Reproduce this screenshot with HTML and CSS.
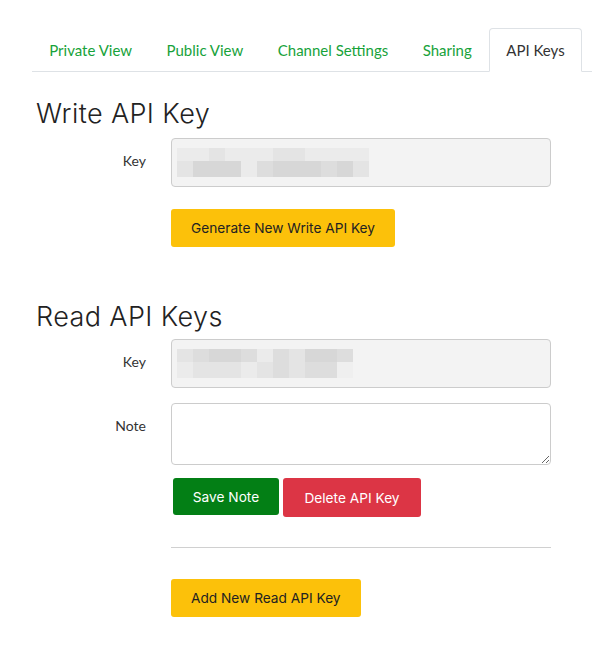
FILE: index.html
```html
<!DOCTYPE html>
<html lang="en">
<head>
    <meta charset="UTF-8">
    <meta name="viewport" content="width=device-width, initial-scale=1.0">
    <title>API Keys</title>
    <link rel="stylesheet" href="styles.css">
</head>
<body>
    <ul class="tabs">
        <li class="tab"><a href="#">Private View</a></li>
        <li class="tab"><a href="#">Public View</a></li>
        <li class="tab"><a href="#">Channel Settings</a></li>
        <li class="tab"><a href="#">Sharing</a></li>
        <li class="tab active"><a href="#">API Keys</a></li>
    </ul>

    <div class="panel">
        <h3>Write API Key</h3>
        <div class="row">
            <label>Key</label>
            <div class="field">
                <div class="key-box">
                    <div class="blur">
                        <div class="blur-row">
                            <i class="a"></i><i class="a"></i><i class="b"></i><i class="a"></i><i class="a"></i><i class="a"></i>
                            <i class="b"></i><i class="b"></i><i class="a"></i><i class="a"></i><i class="a"></i><i class="a"></i>
                        </div>
                        <div class="blur-row">
                            <i class="b"></i><i class="d"></i><i class="d"></i><i class="d"></i><i class="a"></i><i class="c"></i>
                            <i class="d"></i><i class="d"></i><i class="d"></i><i class="c"></i><i class="d"></i><i class="b"></i>
                        </div>
                    </div>
                </div>
            </div>
        </div>
        <div class="row">
            <span></span>
            <div class="field actions">
                <button class="btn btn-warning">Generate New Write API Key</button>
            </div>
        </div>

        <h3 class="read-title">Read API Keys</h3>
        <div class="row">
            <label>Key</label>
            <div class="field">
                <div class="key-box">
                    <div class="blur">
                        <div class="blur-row">
                            <i class="b"></i><i class="c"></i><i class="d"></i><i class="d"></i><i class="c"></i><i class="a"></i>
                            <i class="c"></i><i class="b"></i><i class="d"></i><i class="d"></i><i class="c"></i>
                        </div>
                        <div class="blur-row">
                            <i class="a"></i><i class="b"></i><i class="b"></i><i class="b"></i><i class="a"></i><i class="b"></i>
                            <i class="c"></i><i class="b"></i><i class="c"></i><i class="c"></i><i class="e"></i>
                        </div>
                    </div>
                </div>
            </div>
        </div>
        <div class="row">
            <label>Note</label>
            <div class="field">
                <textarea class="note"></textarea>
            </div>
        </div>
        <div class="row">
            <span></span>
            <div class="field buttons">
                <button class="btn btn-save">Save Note</button>
                <button class="btn btn-danger">Delete API Key</button>
            </div>
        </div>
        <div class="row">
            <span></span>
            <div class="field">
                <hr>
                <button class="btn btn-warning btn-add">Add New Read API Key</button>
            </div>
        </div>
    </div>
</body>
</html>
```

FILE: styles.css
```css
* {padding: 0; margin: 0; box-sizing: border-box;}
body {background: #fff; font-family: "Lato", "Open Sans", sans-serif; color: #222;}

/* tab strip */
.tabs {display: flex; list-style: none; margin: 28px 0 0 32px; border-bottom: 1px solid #dee2e6;}
.tab {margin-bottom: -1px;}
.tab a {display: block; padding: 9px 16.25px 9px; line-height: 24px; font-size: 15px; color: #17a23a; text-decoration: none; border: 1px solid transparent; border-radius: 4px 4px 0 0;}
.tab.active a {color: #333; background: #fff; border-color: #dee2e6 #dee2e6 #fff;}

/* form */
.panel {padding: 0 40px 40px 36px;}
h3 {font-family: "Inter", "Lato", sans-serif; font-weight: 300; font-size: 27px; letter-spacing: 0.4px; line-height: 32px; color: #222; margin: 26px 0 8px;}
h3.read-title {margin-top: 54px; margin-bottom: 6px;}

.row {display: grid; grid-template-columns: 135px 380px; margin-bottom: 15px;}
.row label {text-align: right; padding: 13px 25px 0 0; font-size: 14px; line-height: 20px; color: #333;}

.key-box {height: 49px; background: #f3f3f3; border: 1px solid #ccc; border-radius: 4px; padding: 9px 5px;}
.blur {filter: blur(0.6px);}
.blur-row {display: flex;}
.blur-row:first-child {height: 13px;}
.blur-row i {display: block; width: 16px; height: 100%;}
.blur-row + .blur-row {height: 16px;}
.blur-row .a {background: #ebebeb;}
.blur-row .b {background: #e4e4e4;}
.blur-row .c {background: #dddddd;}
.blur-row .d {background: #d7d7d7;}
.blur-row .e {background: #efefef;}

.note {display: block; width: 100%; height: 62px; border: 1px solid #ccc; border-radius: 4px; resize: vertical; font: inherit; padding: 6px 10px;}

.actions {padding-top: 7px;}

.btn {display: inline-block; border: none; border-radius: 3px; font-family: "Inter", "Lato", sans-serif; font-size: 13.7px; line-height: 20px; cursor: pointer;}
.btn-warning {background: #fcc10a; color: #222; height: 38px; padding: 0 20px;}
.btn-save {background: #037f15; color: #fff; height: 37px; width: 106px; margin-left: 2px;}
.btn-danger {background: #dc3545; color: #fff; height: 39px; width: 138px; margin-left: 4px;}
.buttons {display: flex; align-items: flex-start; margin-top: -2px;}

hr {border: none; border-top: 1px solid #d0d0d0; margin: 15px 0 31px;}
.btn-add {padding: 0 20px;}
```
